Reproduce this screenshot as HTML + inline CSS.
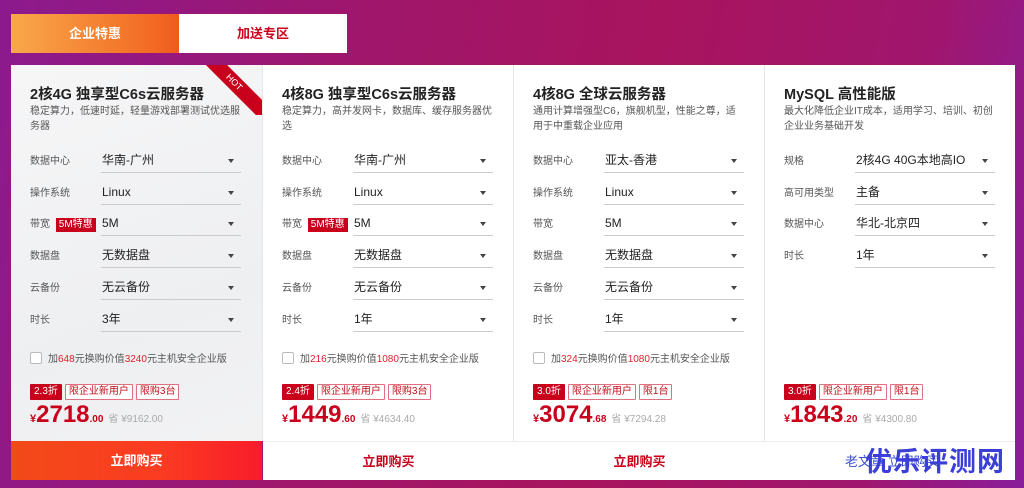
<!DOCTYPE html>
<html><head><meta charset="utf-8"><style>
*{margin:0;padding:0;box-sizing:border-box}
body{width:1024px;height:488px;overflow:hidden;font-family:"Liberation Sans","Noto Sans CJK SC",sans-serif;position:relative;
background:linear-gradient(100deg,#8c1a8e 0%,#a0166a 35%,#a8145e 60%,#a0166e 85%,#8a1e9a 100%)}
.tab{position:absolute;top:14px;height:39px;width:168px;font-size:13px;font-weight:bold;text-align:center;line-height:39px}
.t1{left:11px;background:linear-gradient(90deg,#f9a84a,#f26a24 85%,#ef5a1e);color:#fff}
.t2{left:179px;background:#fff;color:#d0021b}
.card{position:absolute;top:65px;height:415px;width:251px;background:#fff}
.c1{background:linear-gradient(160deg,#f6f6f7,#eeeff1 60%,#f3f3f4)}
.title{position:absolute;left:19px;top:18px;font-size:14.5px;font-weight:bold;color:#222}
.desc{position:absolute;left:19px;top:39px;width:210px;font-size:10px;line-height:15px;color:#555}
.row{position:absolute;left:19px;width:211px;height:22px}
.lab{position:absolute;left:0;top:3px;font-size:10px;color:#555;line-height:16px}
.val{position:absolute;left:71px;width:140px;top:0;height:22px;border-bottom:1px solid #c9cbd0;font-size:12px;color:#222;line-height:18px;padding-left:1px}
.val:after{content:"";position:absolute;right:7px;top:8px;border:3.5px solid transparent;border-top:4px solid #444;border-bottom:0}
.hotbadge{background:#c8001c;color:#fff;font-size:10px;padding:0 3px;line-height:14px;display:inline-block}
.chk{position:absolute;left:19px;top:287px;font-size:10px;color:#555;line-height:13px}
.chk i{display:inline-block;width:12px;height:12px;border:1px solid #bbb;border-radius:2px;background:#fff;vertical-align:-2px;margin-right:6px}
.chk b{font-weight:normal;color:#e0202e}
.tags{position:absolute;left:19px;top:319px;font-size:10px;white-space:nowrap}
.tags span{display:inline-block;border:1px solid #e07080;color:#c0101b;padding:0 3px;line-height:14px;margin-right:3px;border-radius:1px;background:#fff}
.tags span.f{background:#c8001c;color:#fff;border-color:#c8001c}
.price{position:absolute;left:19px;top:336px;color:#c8001c;font-weight:bold;white-space:nowrap}
.price .y{font-size:11px}.price .n{font-size:24px}.price .d{font-size:10px}
.price .o{font-weight:normal;color:#aaa;font-size:10px;margin-left:5px}
.btn{position:absolute;left:0;bottom:0;width:100%;height:39px;text-align:center;line-height:39px;font-size:13px;font-weight:bold;color:#c8001c;background:#fff;border-top:1px solid #eee}
.c1 .btn{background:linear-gradient(90deg,#f24a18,#fb3b22 60%,#f81c2a);color:#fff;border:0}
.sep{position:absolute;top:65px;height:376px;width:1px;background:#e6e6e6}
</style></head><body>
<div class="tab t1">企业特惠</div><div class="tab t2">加送专区</div>

<div class="card c1" style="left:11px">
<div style="position:absolute;right:0;top:0;width:70px;height:50px;overflow:hidden"><div style="position:absolute;right:-22px;top:10px;width:100px;height:15px;background:#c8001c;transform:rotate(45deg);color:#fff;font-size:9px;text-align:center;line-height:15px">HOT</div></div>
<div class="title">2核4G 独享型C6s云服务器</div>
<div class="desc">稳定算力，低速时延，轻量游戏部署测试优选服务器</div>
<div class="row" style="top:86px"><span class="lab">数据中心</span><div class="val">华南-广州</div></div>
<div class="row" style="top:118px"><span class="lab">操作系统</span><div class="val">Linux</div></div>
<div class="row" style="top:149px"><span class="lab">带宽 <span class="hotbadge" style="margin-left:3px">5M特惠</span></span><div class="val">5M</div></div>
<div class="row" style="top:181px"><span class="lab">数据盘</span><div class="val">无数据盘</div></div>
<div class="row" style="top:213px"><span class="lab">云备份</span><div class="val">无云备份</div></div>
<div class="row" style="top:245px"><span class="lab">时长</span><div class="val">3年</div></div>
<div class="chk"><i></i>加<b>648</b>元换购价值<b>3240</b>元主机安全企业版</div>
<div class="tags"><span class="f">2.3折</span><span>限企业新用户</span><span>限购3台</span></div>
<div class="price"><span class="y">¥</span><span class="n">2718</span><span class="d">.00</span><span class="o">省 ¥9162.00</span></div>
<div class="btn">立即购买</div>
</div>

<div class="card" style="left:263px">
<div class="title">4核8G 独享型C6s云服务器</div>
<div class="desc">稳定算力，高并发网卡，数据库、缓存服务器优选</div>
<div class="row" style="top:86px"><span class="lab">数据中心</span><div class="val">华南-广州</div></div>
<div class="row" style="top:118px"><span class="lab">操作系统</span><div class="val">Linux</div></div>
<div class="row" style="top:149px"><span class="lab">带宽 <span class="hotbadge" style="margin-left:3px">5M特惠</span></span><div class="val">5M</div></div>
<div class="row" style="top:181px"><span class="lab">数据盘</span><div class="val">无数据盘</div></div>
<div class="row" style="top:213px"><span class="lab">云备份</span><div class="val">无云备份</div></div>
<div class="row" style="top:245px"><span class="lab">时长</span><div class="val">1年</div></div>
<div class="chk"><i></i>加<b>216</b>元换购价值<b>1080</b>元主机安全企业版</div>
<div class="tags"><span class="f">2.4折</span><span>限企业新用户</span><span>限购3台</span></div>
<div class="price"><span class="y">¥</span><span class="n">1449</span><span class="d">.60</span><span class="o">省 ¥4634.40</span></div>
<div class="btn">立即购买</div>
</div>

<div class="card" style="left:514px">
<div class="title">4核8G 全球云服务器</div>
<div class="desc">通用计算增强型C6，旗舰机型，性能之尊，适用于中重载企业应用</div>
<div class="row" style="top:86px"><span class="lab">数据中心</span><div class="val">亚太-香港</div></div>
<div class="row" style="top:118px"><span class="lab">操作系统</span><div class="val">Linux</div></div>
<div class="row" style="top:149px"><span class="lab">带宽</span><div class="val">5M</div></div>
<div class="row" style="top:181px"><span class="lab">数据盘</span><div class="val">无数据盘</div></div>
<div class="row" style="top:213px"><span class="lab">云备份</span><div class="val">无云备份</div></div>
<div class="row" style="top:245px"><span class="lab">时长</span><div class="val">1年</div></div>
<div class="chk"><i></i>加<b>324</b>元换购价值<b>1080</b>元主机安全企业版</div>
<div class="tags"><span class="f">3.0折</span><span>限企业新用户</span><span>限1台</span></div>
<div class="price"><span class="y">¥</span><span class="n">3074</span><span class="d">.68</span><span class="o">省 ¥7294.28</span></div>
<div class="btn">立即购买</div>
</div>

<div class="card" style="left:765px;width:250px">
<div class="title">MySQL 高性能版</div>
<div class="desc">最大化降低企业IT成本，适用学习、培训、初创企业业务基础开发</div>
<div class="row" style="top:86px"><span class="lab">规格</span><div class="val">2核4G 40G本地高IO</div></div>
<div class="row" style="top:118px"><span class="lab">高可用类型</span><div class="val">主备</div></div>
<div class="row" style="top:149px"><span class="lab">数据中心</span><div class="val">华北-北京四</div></div>
<div class="row" style="top:181px"><span class="lab">时长</span><div class="val">1年</div></div>
<div class="tags"><span class="f">3.0折</span><span>限企业新用户</span><span>限1台</span></div>
<div class="price"><span class="y">¥</span><span class="n">1843</span><span class="d">.20</span><span class="o">省 ¥4300.80</span></div>
<div class="btn" style="color:#3a4fd0;text-align:left;padding-left:80px;font-weight:normal">老文章 立即购买</div>
<div style="position:absolute;left:100px;top:375px;font-size:27px;font-weight:bold;color:#3b3fd8;letter-spacing:1px;white-space:nowrap">优乐评测网</div>
</div>
<div class="sep" style="left:262px"></div><div class="sep" style="left:513px"></div><div class="sep" style="left:764px"></div>
</body></html>
